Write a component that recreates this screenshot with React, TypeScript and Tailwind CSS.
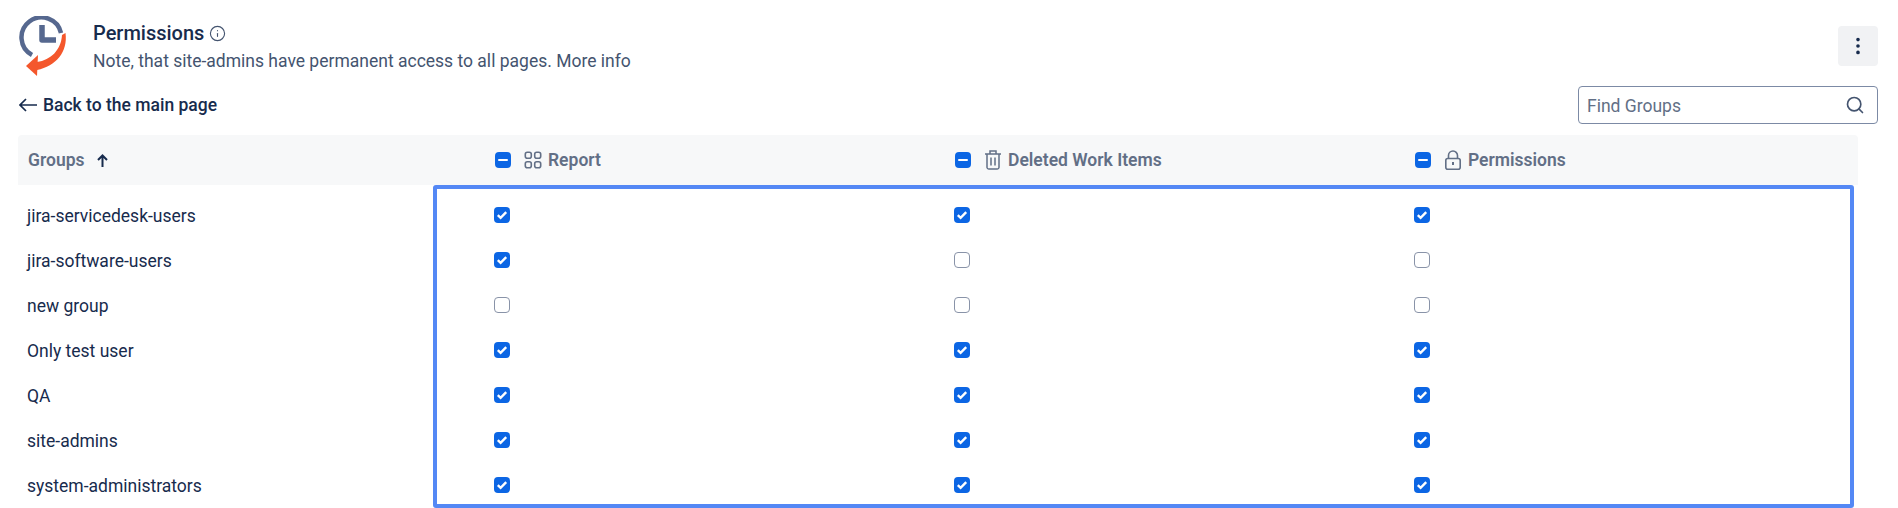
import { Info, MoreVertical, Search } from 'lucide-react'

interface Group {
  name: string
  access: boolean[]
}

const groups: Group[] = [
  { name: 'jira-servicedesk-users', access: [true, true, true] },
  { name: 'jira-software-users', access: [true, false, false] },
  { name: 'new group', access: [false, false, false] },
  { name: 'Only test user', access: [true, true, true] },
  { name: 'QA', access: [true, true, true] },
  { name: 'site-admins', access: [true, true, true] },
  { name: 'system-administrators', access: [true, true, true] },
]

function Logo() {
  return (
    <svg width="50" height="62" viewBox="0 0 50 62" fill="none">
      <path d="M14 39A20 20 0 1 1 43 17" stroke="#56688f" strokeWidth="4.5" />
      <path d="M24 9V24H38" stroke="#56688f" strokeWidth="5.5" strokeLinejoin="round" />
      <path d="M47.5 17C50 36 38 50 19 54L19 46C33 44 43 34 44 19Z" fill="#f4572c" />
      <path d="M8 50L20 39L19 60Z" fill="#f4572c" />
    </svg>
  )
}

function Checkbox({ checked }: { checked: boolean }) {
  if (!checked) {
    return <span className="block w-4 h-4 rounded-[4px] border border-[#8993a8] bg-white" />
  }
  return (
    <span className="flex items-center justify-center w-4 h-4 rounded-[4px] bg-[#0c66e4]">
      <svg width="12" height="12" viewBox="0 0 12 12" fill="none">
        <path d="M1.8 6.2L4.6 8.8L10.2 3.2" stroke="white" strokeWidth="2.4" />
      </svg>
    </span>
  )
}

function HeaderCheckbox() {
  return (
    <span className="flex items-center justify-center w-4 h-4 rounded-[4px] bg-[#0c66e4]">
      <span className="block w-2.5 h-0.5 rounded-sm bg-white" />
    </span>
  )
}

function ReportIcon() {
  return (
    <svg width="18" height="18" viewBox="0 0 18 18" fill="none" stroke="#626f86" strokeWidth="1.6">
      <rect x="1.3" y="1.3" width="6" height="6" rx="2" />
      <rect x="10.7" y="1.3" width="6" height="6" rx="2" />
      <rect x="1.3" y="10.7" width="6" height="6" rx="2" />
      <rect x="10.7" y="10.7" width="6" height="6" rx="2" />
    </svg>
  )
}

function TrashIcon() {
  return (
    <svg width="16" height="20" viewBox="0 0 16 20" fill="none" stroke="#626f86" strokeWidth="1.5">
      <path d="M0 4H16M5 4V1H11V4M2 4V17.5A1.7 1.7 0 0 0 3.7 19H12.3A1.7 1.7 0 0 0 14 17.5V4M6 7.5V15.5M10 7.5V15.5" />
    </svg>
  )
}

function LockIcon() {
  return (
    <svg width="16" height="20" viewBox="0 0 16 20" fill="none" stroke="#626f86" strokeWidth="1.6">
      <path d="M3.5 8.5V5.5A4.5 4.5 0 0 1 12.5 5.5V8.5" />
      <rect x="0.8" y="8.5" width="14.4" height="10.7" rx="2" />
      <path d="M8 12V15" strokeWidth="2" />
    </svg>
  )
}

export default function App() {
  return (
    <div className="w-[1898px] h-[508px] overflow-hidden bg-white pl-[18px] pr-5 font-['Roboto',sans-serif] text-[#172b4d]">
      <div className="flex items-start h-[86px] pt-4">
        <Logo />
        <div className="ml-[25px] mt-[7px]">
          <div className="flex items-center gap-[5px] h-5 text-[20px] font-medium">
            Permissions
            <Info size={17} color="#44546f" strokeWidth={1.6} />
          </div>
          <div className="mt-[8px] text-[17.5px] leading-5 text-[#44546f]">
            Note, that site-admins have permanent access to all pages. More info
          </div>
        </div>
        <button className="flex items-center justify-center ml-auto mt-[10px] w-10 h-10 rounded bg-[#f1f2f4]">
          <MoreVertical size={22} color="#172b4d" />
        </button>
      </div>

      <div className="flex items-center justify-between h-[38px]">
        <div className="flex items-center gap-[6px] ml-px text-[17.5px] font-medium">
          <svg width="18" height="14" viewBox="0 0 18 14" fill="none" stroke="#172b4d" strokeWidth="1.7">
            <path d="M18 7H1M7 1L1 7L7 13" />
          </svg>
          <span className="pt-px">Back to the main page</span>
        </div>
        <div className="flex items-center justify-between w-[300px] h-[38px] pl-2 pr-3 rounded border border-[#7c8aa5]">
          <span className="pt-[2px] text-[17.5px] text-[#626f86]">Find Groups</span>
          <Search size={20} color="#44546f" />
        </div>
      </div>

      <div className="relative w-[1840px] mt-[11px]">
        <div className="flex items-center h-[50px] rounded-t bg-[#f7f8f9] text-[17.5px] font-semibold text-[#626f86]">
          <div className="flex items-center gap-[12px] w-[477px] pl-[10px]">
            Groups
            <svg width="11" height="13" viewBox="0 0 11 13" fill="none" stroke="#172b4d" strokeWidth="2">
              <path d="M5.5 13V1.5M1 6L5.5 1.5L10 6" />
            </svg>
          </div>
          <div className="flex items-center w-[460px]">
            <HeaderCheckbox />
            <span className="ml-[13px] mr-[6px]"><ReportIcon /></span>
            Report
          </div>
          <div className="flex items-center w-[460px]">
            <HeaderCheckbox />
            <span className="ml-[14px] mr-[7px]"><TrashIcon /></span>
            Deleted Work Items
          </div>
          <div className="flex items-center flex-1">
            <HeaderCheckbox />
            <span className="ml-[14px] mr-[7px]"><LockIcon /></span>
            Permissions
          </div>
        </div>

        <div className="pt-[7.5px]">
          {groups.map(group => (
            <div key={group.name} className="flex items-center h-[45px] text-[17.5px]">
              <div className="w-[476px] shrink-0 pl-[9px] pt-[2px]">{group.name}</div>
              {group.access.map((on, i) => (
                <div key={i} className="w-[460px] shrink-0">
                  <Checkbox checked={on} />
                </div>
              ))}
            </div>
          ))}
        </div>

        <div className="absolute left-[415px] top-[50px] w-[1421px] h-[323px] rounded-[3px] border-4 border-[#5488f5]" />
      </div>
    </div>
  )
}
